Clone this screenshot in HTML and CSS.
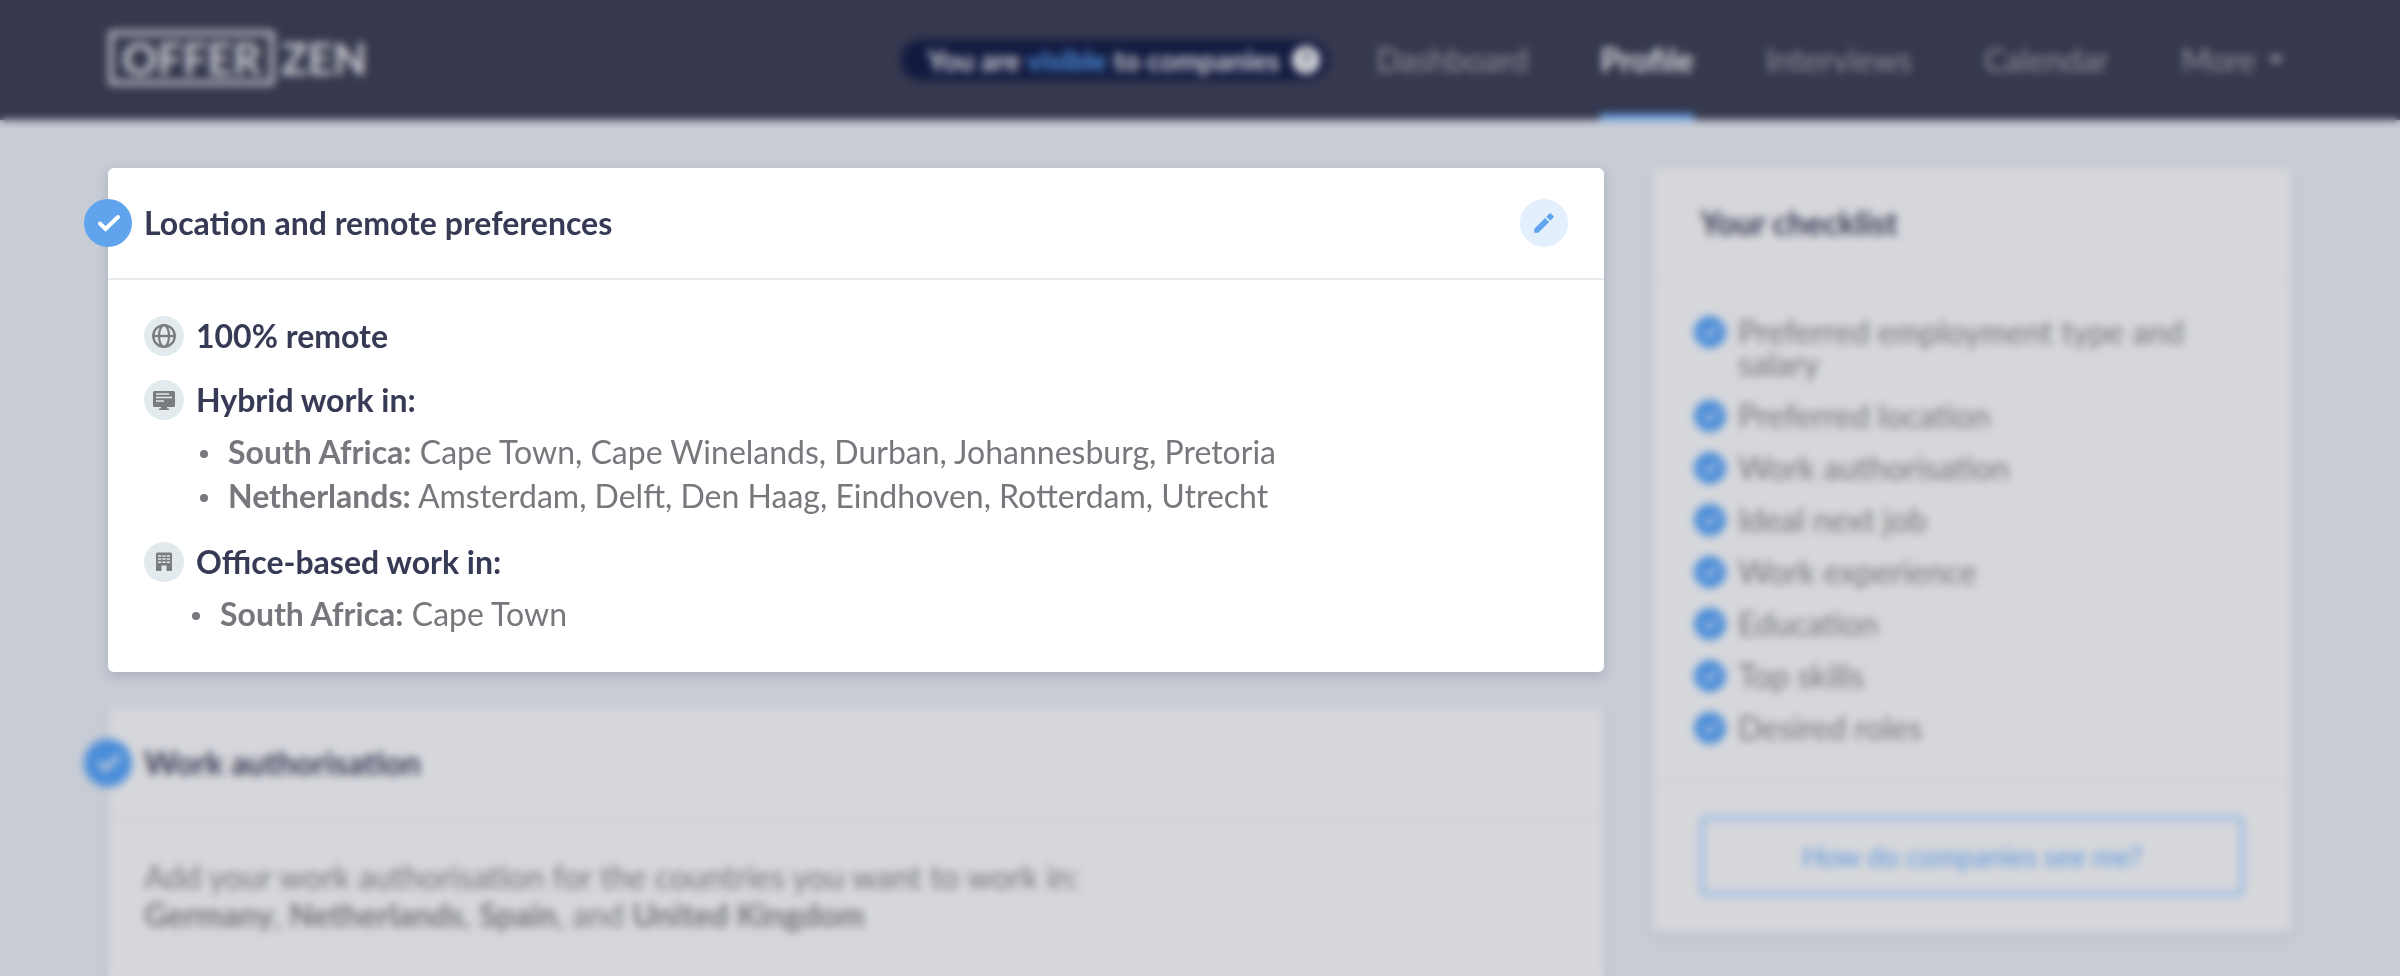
FILE: index.html
```html
<!DOCTYPE html>
<html lang="en">
<head>
<meta charset="utf-8">
<meta name="viewport" content="width=device-width, initial-scale=1">
<title>OfferZen – Profile</title>
<link rel="stylesheet" href="styles.css">
</head>
<body>
<svg class="sprite" aria-hidden="true">
  <symbol id="tick" viewBox="0 0 48 48">
    <path d="M16 24.500L21.500 30L34 18" fill="none" stroke="currentColor" stroke-width="4" stroke-linecap="round" stroke-linejoin="miter"/>
  </symbol>
</svg>

<header class="topbar">
  <a class="logo" href="#"><span class="logo-box">OFFER</span><span>ZEN</span></a>
  <div class="topbar-end">
    <div class="status"><p>You are <strong class="status-value">visible</strong> to companies</p><button class="help" type="button" aria-label="About visibility">?</button></div>
    <nav class="nav" aria-label="Main">
      <a class="nav-link" href="#">Dashboard</a>
      <a class="nav-link nav-link-active" href="#" aria-current="page">Profile</a>
      <a class="nav-link" href="#">Interviews</a>
      <a class="nav-link" href="#">Calendar</a>
      <a class="nav-link" href="#">More <span class="caret"></span></a>
    </nav>
  </div>
</header>

<div class="scrim"></div>

<div class="layout">
  <main class="column">
    <section class="card card-focus">
      <div class="card-head">
        <span class="badge"><svg class="badge-icon"><use href="#tick"/></svg></span>
        <h2 class="card-title">Location and remote preferences</h2>
        <button class="edit" type="button" aria-label="Edit location and remote preferences">
          <svg class="edit-icon" viewBox="0 0 24 24" aria-hidden="true">
            <path d="M3 17.300V21h3.700L16.700 11L13 7.300z M14.100 6.200L17.800 9.900L20.700 7a1 1 0 0 0 0-1.400L18.400 3.300a1 1 0 0 0-1.400 0z" fill="currentColor"/>
          </svg>
        </button>
      </div>
      <div class="card-body">
        <div class="pref">
          <span class="pref-icon">
            <svg viewBox="0 0 24 24" width="24" height="24" fill="none" stroke="currentColor" stroke-width="2.300" aria-hidden="true">
              <circle cx="12" cy="12" r="10.800"/><ellipse cx="12" cy="12" rx="5" ry="10.800"/><path d="M1 12h22"/>
            </svg>
          </span>
          <h3 class="pref-title">100% remote</h3>
        </div>
        <div class="pref">
          <span class="pref-icon">
            <svg viewBox="0 0 24 24" width="24" height="24" aria-hidden="true">
              <path d="M2.500 3h19a1.500 1.500 0 0 1 1.500 1.500v13a1.500 1.500 0 0 1-1.500 1.500H15c0 1 .5 1.500 1.200 1.500h.8V22H7v-1.500h.8C8.500 20.500 9 20 9 19H2.500A1.500 1.500 0 0 1 1 17.500v-13A1.500 1.500 0 0 1 2.500 3z" fill="currentColor"/>
              <path d="M4 6h13M4 9.500h16M4 13h8" stroke="#e2eaed" stroke-width="1.500"/>
            </svg>
          </span>
          <h3 class="pref-title">Hybrid work in:</h3>
        </div>
        <ul class="places places-nested">
          <li><strong>South Africa:</strong> Cape Town, Cape Winelands, Durban, Johannesburg, Pretoria</li>
          <li><strong>Netherlands:</strong> Amsterdam, Delft, Den Haag, Eindhoven, Rotterdam, Utrecht</li>
        </ul>
        <div class="pref">
          <span class="pref-icon">
            <svg viewBox="0 0 24 24" width="24" height="24" aria-hidden="true">
              <path d="M5.500 2.500h13a1.500 1.500 0 0 1 1.500 1.500v16a1 1 0 0 1-1 1h-4.500v-5.500h-5V21H5a1 1 0 0 1-1-1V4a1.500 1.500 0 0 1 1.500-1.500z" fill="currentColor"/>
              <path d="M6 6h3.300M10.400 6h3.300M14.700 6H18M6 9h3.300M10.400 9h3.300M14.700 9H18M6 12.300h3.300M10.400 12.300h3.300M14.700 12.300H18" stroke="#e2eaed" stroke-width="1.400"/>
            </svg>
          </span>
          <h3 class="pref-title">Office-based work in:</h3>
        </div>
        <ul class="places">
          <li><strong>South Africa:</strong> Cape Town</li>
        </ul>
      </div>
    </section>

    <section class="card">
      <div class="card-head">
        <span class="badge"><svg class="badge-icon"><use href="#tick"/></svg></span>
        <h2 class="card-title">Work authorisation</h2>
      </div>
      <div class="card-body card-body-tall">
        <p class="summary">Add your work authorisation for the countries you want to work in:<br>
        <strong>Germany</strong>, <strong>Netherlands</strong>, <strong>Spain</strong>, and <strong>United Kingdom</strong></p>
      </div>
    </section>
  </main>

  <aside class="card">
    <div class="card-head card-head-side">
      <h2 class="card-title">Your checklist</h2>
    </div>
    <ul class="checklist">
      <li class="check"><span class="check-mark"><svg class="badge-icon"><use href="#tick"/></svg></span>Preferred employment type and salary</li>
      <li class="check"><span class="check-mark"><svg class="badge-icon"><use href="#tick"/></svg></span>Preferred location</li>
      <li class="check"><span class="check-mark"><svg class="badge-icon"><use href="#tick"/></svg></span>Work authorisation</li>
      <li class="check"><span class="check-mark"><svg class="badge-icon"><use href="#tick"/></svg></span>Ideal next job</li>
      <li class="check"><span class="check-mark"><svg class="badge-icon"><use href="#tick"/></svg></span>Work experience</li>
      <li class="check"><span class="check-mark"><svg class="badge-icon"><use href="#tick"/></svg></span>Education</li>
      <li class="check"><span class="check-mark"><svg class="badge-icon"><use href="#tick"/></svg></span>Top skills</li>
      <li class="check"><span class="check-mark"><svg class="badge-icon"><use href="#tick"/></svg></span>Desired roles</li>
    </ul>
    <div class="side-foot">
      <button class="preview" type="button">How do companies see me?</button>
    </div>
  </aside>
</div>
</body>
</html>
```
FILE: styles.css
```css
* { box-sizing: border-box; }

body {
  margin: 0;
  height: 100vh;
  background: #c8ccd5;
  color: #77787d;
  font-family: Lato, "Open Sans", sans-serif;
  font-size: 32px;
  line-height: 44px;
  overflow: hidden;
}

h2, h3, p, ul { margin: 0; padding: 0; }
ul { list-style: none; }
a { color: inherit; text-decoration: none; }
button { font: inherit; cursor: pointer; }
.sprite { display: none; }

.topbar {
  display: flex;
  align-items: center;
  justify-content: space-between;
  height: 120px;
  padding: 0 116px 0 108px;
  background: #35384e;
}

.logo {
  display: flex;
  align-items: center;
  gap: 6px;
  padding-bottom: 4px;
  color: #c9cad0;
  font-size: 44px;
  font-weight: 700;
}

.logo-box {
  padding: 0 8px;
  border: 6px solid #a9aab4;
  border-radius: 4px;
}

.topbar-end {
  display: flex;
  align-items: center;
  gap: 48px;
}

.status {
  display: flex;
  align-items: center;
  gap: 12px;
  padding: 0 8px 0 26px;
  border-radius: 20px;
  background: #121a40;
  color: #d0d1d7;
  font-size: 28px;
  font-weight: 700;
  line-height: 40px;
}

.status-value { color: #4a86cc; }

.help {
  width: 28px;
  height: 28px;
  padding: 0;
  border: 0;
  border-radius: 50%;
  background: #d6d7db;
  color: #121a40;
  font-size: 20px;
  font-weight: 700;
  line-height: 28px;
}

.nav {
  display: flex;
  gap: 72px;
  font-size: 32px;
}

.nav-link {
  display: flex;
  align-items: center;
  gap: 12px;
  height: 120px;
  border-top: 6px solid transparent;
  border-bottom: 6px solid transparent;
  color: #90919c;
}

.nav-link-active {
  border-bottom-color: #5c9be3;
  color: #d6d7db;
  font-weight: 700;
}

.caret {
  border: 8px solid transparent;
  border-top-color: #a0a1aa;
  border-bottom: 0;
}

/* Softens everything except the focused card */
.scrim {
  position: fixed;
  inset: 0;
  z-index: 1;
  backdrop-filter: blur(4px);
}

.layout {
  display: grid;
  grid-template-columns: minmax(0, 1fr) 640px;
  align-items: start;
  gap: 48px;
  padding: 48px 108px;
}

.column {
  display: grid;
  gap: 36px;
}

.card {
  border-radius: 6px;
  background: #d6d7db;
  box-shadow: 0 4px 12px rgba(53, 56, 78, 0.1);
}

.card-focus {
  position: relative;
  z-index: 2;
  background: #fff;
  box-shadow: 0 4px 12px rgba(53, 56, 78, 0.2);
}

.card-head {
  display: flex;
  align-items: center;
  height: 112px;
  padding-right: 36px;
  border-bottom: 2px solid #d0d2d7;
}

.card-focus .card-head { border-bottom-color: #e5eaee; }
.card-head-side { padding-left: 48px; }

.badge {
  width: 48px;
  height: 48px;
  margin: 0 12px 0 -24px;
  border-radius: 50%;
  background: #4a8dd9;
  color: #d6d7db;
}

.card-focus .badge {
  background: #5fa4ed;
  color: #fff;
}

.badge-icon {
  display: block;
  width: 100%;
  height: 100%;
}

.card-title {
  flex: 1;
  color: #363a55;
  font-size: 32px;
  font-weight: 700;
}

.edit {
  display: grid;
  place-items: center;
  width: 48px;
  height: 48px;
  padding: 0;
  border: 0;
  border-radius: 50%;
  background: #e3effc;
  color: #5fa4ed;
}

.edit-icon {
  width: 26px;
  height: 26px;
}

.card-body { padding: 36px; }
.card-body-tall { padding: 38px 36px 120px; }

.pref {
  display: flex;
  align-items: center;
  gap: 12px;
}

.pref + .pref { margin-top: 24px; }

.pref-icon {
  display: grid;
  place-items: center;
  width: 40px;
  height: 40px;
  border-radius: 50%;
  background: #e2eaed;
  color: #7b7c80;
}

.pref-title {
  color: #363a55;
  font-size: 32px;
  font-weight: 700;
  line-height: 40px;
}

.places {
  margin-top: 10px;
  padding-left: 76px;
}

.places-nested {
  padding-left: 84px;
  margin-bottom: 24px;
}

.places li::before {
  content: "";
  float: left;
  width: 8px;
  height: 8px;
  margin: 20px 0 0 -28px;
  border-radius: 50%;
  background: currentColor;
}

.summary { line-height: 38px; }

.checklist {
  display: grid;
  gap: 20px;
  padding: 36px 48px 36px 42px;
}

.check {
  display: flex;
  gap: 12px;
  line-height: 32px;
}

.check-mark {
  flex: none;
  width: 32px;
  height: 32px;
  border-radius: 50%;
  background: #4a8dd9;
  color: #d6d7db;
}

.side-foot {
  padding: 34px 48px 36px;
  border-top: 2px solid #d0d2d7;
}

.preview {
  width: 100%;
  padding: 14px;
  border: 4px solid #8fb7e4;
  border-radius: 6px;
  background: transparent;
  color: #5f9ade;
  font-size: 28px;
}
```
